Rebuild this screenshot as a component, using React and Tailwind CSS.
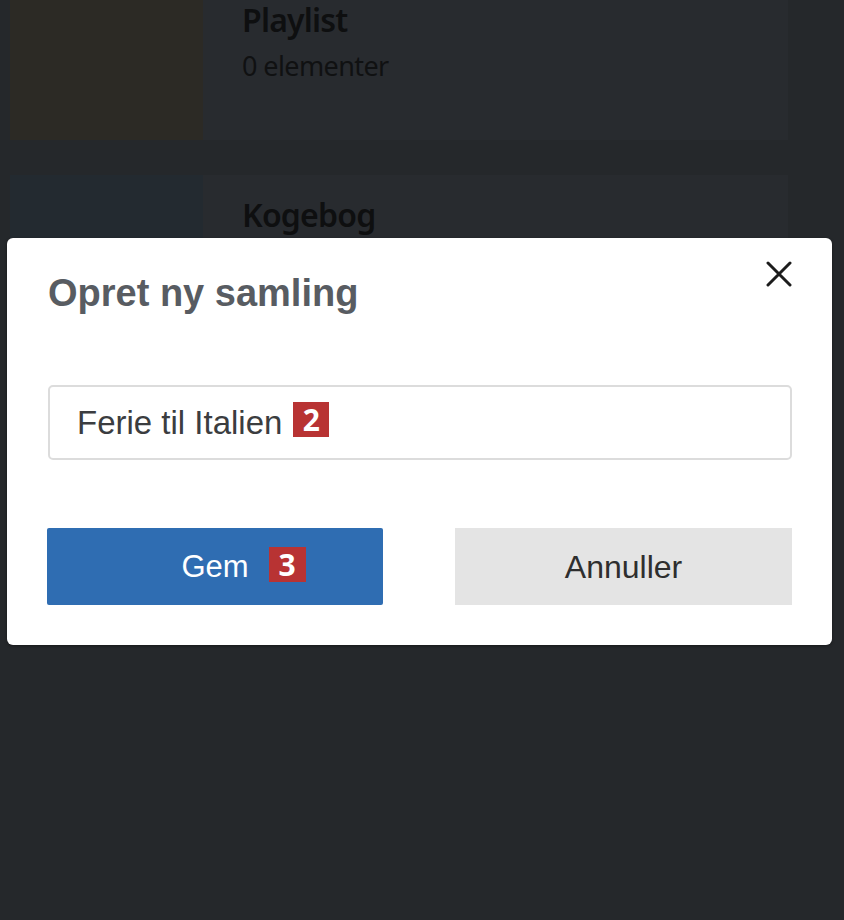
import React from "react";

function Card({ title, sub, thumb }) {
  return (
    <div className="flex h-[160px] w-[778px] bg-[#282b2f] ml-[10px]">
      <div className={`w-[193px] h-full ${thumb}`} />
      <div className="flex flex-col pl-[39px] pt-[20px]" style={{ fontFamily: '"Noto Sans", "Open Sans", sans-serif' }}>
        <div className="text-[32px] font-semibold leading-[40px] text-[#0e0f10] tracking-[-0.8px]">{title}</div>
        <div className="text-[27px] leading-[34px] mt-[9px] text-[#101112] tracking-[-0.6px]">{sub}</div>
      </div>
    </div>
  );
}

export default function App() {
  return (
    <div className="relative w-[844px] h-[920px] overflow-hidden bg-[#25282b]">
      <div className="flex flex-col gap-[35px] -mt-[20px]">
        <Card title="Playlist" sub="0 elementer" thumb="bg-[#2c2a25]" />
        <Card title="Kogebog" sub="0 elementer" thumb="bg-[#232a30]" />
      </div>

      <div
        className="absolute left-[7px] top-[238px] w-[825px] h-[407px] bg-white rounded-[6px] shadow-[0_1px_3px_rgba(0,0,0,0.4)] px-[40px]"
        style={{ fontFamily: '"Liberation Sans", Arial, sans-serif' }}
      >
        <div className="relative pt-[33px]">
          <h1 className="text-[38px] font-bold text-[#585c62] leading-[44px] ml-[1px]">Opret ny samling</h1>
          <button className="absolute right-[-1px] top-[22px] w-[28px] h-[28px] flex items-center justify-center">
            <svg width="26" height="26" viewBox="0 0 26 26">
              <path d="M2 2 L24 24 M24 2 L2 24" stroke="#1c1c1c" strokeWidth="3" strokeLinecap="round" />
            </svg>
          </button>
        </div>

        <div className="ml-[1px] mt-[70px] h-[75px] border-2 border-[#dcdcdc] rounded-[5px] flex items-center pl-[27px]">
          <span className="text-[33px] text-[#3b3d40] leading-none">Ferie til Italien</span>
          <span className="ml-[11px] mt-[-6px] w-[36px] h-[35px] bg-[#b83333] text-white font-bold text-[30px] flex items-center justify-center leading-none" style={{ fontFamily: '"Open Sans", sans-serif' }}>2</span>
        </div>

        <div className="flex justify-between mt-[68px]">
          <button className="w-[336px] h-[77px] bg-[#2f6db2] rounded-[2px] flex items-center justify-center text-white text-[31px] leading-none">
            <span className="relative">
              Gem
              <span className="absolute left-[calc(100%+20px)] top-[-4px] w-[37px] h-[35px] bg-[#b83333] text-white font-bold text-[30px] flex items-center justify-center leading-none" style={{ fontFamily: '"Open Sans", sans-serif' }}>3</span>
            </span>
          </button>
          <button className="w-[337px] h-[77px] bg-[#e4e4e4] flex items-center justify-center text-[#2e2e2e] text-[32px] leading-none">
            Annuller
          </button>
        </div>
      </div>
    </div>
  );
}
